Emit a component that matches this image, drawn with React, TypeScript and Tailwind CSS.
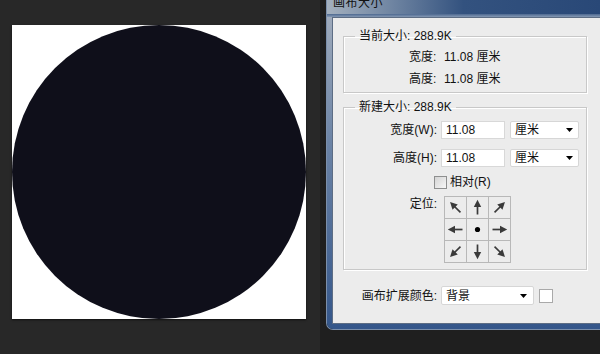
import React from "react";

const FONT = { fontFamily: '"Liberation Sans", "Noto Sans CJK SC", sans-serif' };

const ANGLES: (number | null)[] = [315, 0, 45, 270, null, 90, 225, 180, 135];

function Arrow({ angle }: { angle: number | null }) {
  return (
    <svg width="21" height="21" viewBox="0 0 21 21" className="block">
      {angle === null ? (
        <circle cx="10.5" cy="10.5" r="2.6" fill="#000" />
      ) : (
        <g transform={`rotate(${angle} 10.5 10.5)`}>
          <line x1="10.5" y1="17.5" x2="10.5" y2="8" stroke="#3a3a3a" strokeWidth="1.7" />
          <polygon points="10.5,2.8 6.8,10 14.2,10" fill="#3a3a3a" />
        </g>
      )}
    </svg>
  );
}

function Caret() {
  return (
    <svg width="7" height="4" viewBox="0 0 7 4" className="block">
      <polygon points="0,0 7,0 3.5,4" fill="#000" />
    </svg>
  );
}

function Select({ value, width }: { value: string; width: string }) {
  return (
    <div
      className={`${width} h-[18px] bg-white border border-[#d6d6d6] rounded-[2px] flex items-center pl-[4px] pr-[5px] justify-between`}
    >
      <span className="text-[12px] leading-[14px] text-[#111]">{value}</span>
      <Caret />
    </div>
  );
}

export default function App() {
  return (
    <div className="w-[600px] h-[354px] overflow-hidden flex bg-[#282828]" style={FONT}>
      {/* canvas area */}
      <div className="w-[320px] shrink-0 pl-[12px] pt-[25px]">
        <div className="w-[294px] h-[294px] bg-white shadow-[0_1px_2px_rgba(0,0,0,0.6)]">
          <div className="w-full h-full rounded-full bg-[#0f0f1a]" />
        </div>
      </div>

      {/* dialog column */}
      <div className="flex-1 bg-[#1f1f1f] pl-[6px]">
        <div className="w-[274px] h-[330px] flex flex-col rounded-bl-[7px] border-l border-b border-[#7b8fab] overflow-hidden">
          {/* title bar */}
          <div className="h-[17px] shrink-0 flex flex-col bg-[linear-gradient(to_right,#a4b0be_0%,#7388a4_22%,#33527f_50%,#294877_100%)]">
            <div className="h-[14px] pl-[6px] overflow-hidden">
              <div className="mt-[-4px] text-[12px] leading-[14px] text-[#111] tracking-[0.5px]">画布大小</div>
            </div>
            <div className="h-[3px] bg-[linear-gradient(to_bottom,#4d6890,#8599b4)]" />
          </div>
          {/* frame + content */}
          <div className="flex-1 flex pl-[5px] pb-[5px] bg-[linear-gradient(to_bottom,#9eaabb_0%,#6c84a6_40%,#34568a_100%)]">
            <div className="flex-1 bg-[#ececec] border-l border-t border-b border-[#5d6d84] text-[12px] text-[#111]">
              {/* current size */}
              <fieldset className="mt-[11px] ml-[10px] w-[244px] border border-[#c8c8c8] shadow-[1px_1px_0_#fff,inset_1px_1px_0_#fff] pl-[65px] pt-[3px] pb-[2px]">
                <legend className="ml-[-54px] px-[4px] leading-[14px]">当前大小: 288.9K</legend>
                <div className="flex h-[22px] items-center">
                  <span className="w-[35px]">宽度:</span>
                  <span>11.08 厘米</span>
                </div>
                <div className="flex h-[22px] items-center">
                  <span className="w-[35px]">高度:</span>
                  <span>11.08 厘米</span>
                </div>
              </fieldset>

              {/* new size */}
              <fieldset className="mt-[7px] ml-[10px] w-[244px] border border-[#c8c8c8] shadow-[1px_1px_0_#fff,inset_1px_1px_0_#fff] pt-[7px] pb-[6px]">
                <legend className="ml-[11px] px-[4px] leading-[14px]">新建大小: 288.9K</legend>
                <div className="flex items-center h-[18px]">
                  <span className="w-[93px] text-right">宽度(W):</span>
                  <div className="ml-[4px] w-[64px] h-[18px] bg-white border border-[#d8d8d8] flex items-center pl-[4px]">
                    11.08
                  </div>
                  <div className="ml-[5px]">
                    <Select value="厘米" width="w-[69px]" />
                  </div>
                </div>
                <div className="mt-[10px] flex items-center h-[18px]">
                  <span className="w-[93px] text-right">高度(H):</span>
                  <div className="ml-[4px] w-[64px] h-[18px] bg-white border border-[#d8d8d8] flex items-center pl-[4px]">
                    11.08
                  </div>
                  <div className="ml-[5px]">
                    <Select value="厘米" width="w-[69px]" />
                  </div>
                </div>
                <div className="mt-[8px] h-[14px] flex items-center pl-[90px]">
                  <div className="w-[13px] h-[13px] border border-[#8e8f8f] bg-[linear-gradient(135deg,#d4d4d4,#f7f7f7)]" />
                  <span className="ml-[3px] leading-[14px]">相对(R)</span>
                </div>
                <div className="mt-[7px] flex items-start">
                  <span className="w-[93px] text-right mt-[1px] leading-[14px]">定位:</span>
                  <div className="ml-[7px] grid grid-cols-3 gap-px bg-[#b8b8b8] border border-[#b8b8b8]">
                    {ANGLES.map((a, i) => (
                      <div key={i} className="w-[21px] h-[21px] bg-[#ececec]">
                        <Arrow angle={a} />
                      </div>
                    ))}
                  </div>
                </div>
              </fieldset>

              {/* extension colour */}
              <div className="mt-[16px] flex items-center">
                <span className="w-[104px] text-right">画布扩展颜色:</span>
                <div className="ml-[4px]">
                  <div className="w-[93px] h-[19px] bg-white border border-[#d6d6d6] rounded-[2px] flex items-center justify-between pl-[4px] pr-[6px]">
                    <span className="leading-[14px]">背景</span>
                    <Caret />
                  </div>
                </div>
                <div className="ml-[5px] w-[14px] h-[14px] bg-white border border-[#a9a9a9]" />
              </div>
            </div>
          </div>
        </div>
      </div>
    </div>
  );
}
